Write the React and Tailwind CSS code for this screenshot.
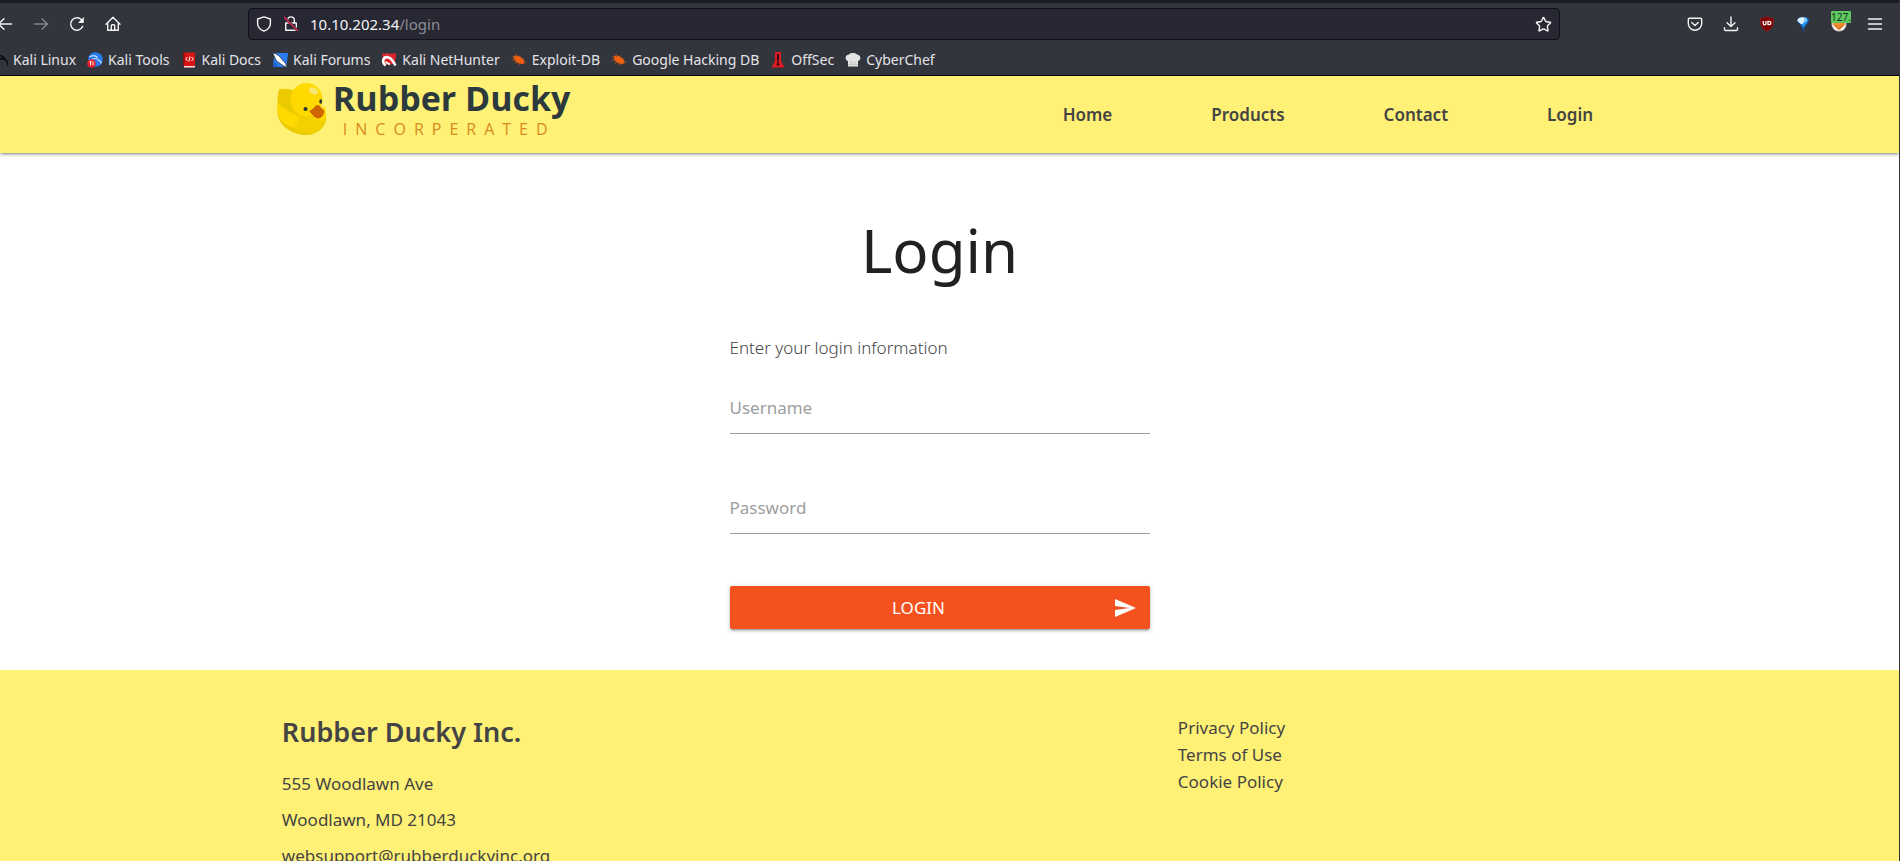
import React from "react";
import { Star } from "lucide-react";

const line = { fill: "none", stroke: "currentColor", strokeWidth: 1.4, strokeLinecap: "round", strokeLinejoin: "round" };

function Svg({ children }) {
  return (
    <svg width="16" height="16" viewBox="0 0 16 16" className="shrink-0" aria-hidden="true">
      {children}
    </svg>
  );
}

function BackIcon() {
  return <Svg><path {...line} d="M14.5 8H1.5M7 2.8 1.5 8 7 13.2" /></Svg>;
}
function ForwardIcon() {
  return <Svg><path {...line} d="M1.5 8h13M9 2.8 14.5 8 9 13.2" /></Svg>;
}
function ReloadIcon() {
  return (
    <Svg>
      <path {...line} d="M13.7 10.3A6.2 6.2 0 1 1 12.6 3.9" />
      <path fill="currentColor" d="M14.8 1v5.3a.6.6 0 0 1-.6.6H9z" />
    </Svg>
  );
}
function HomeIcon() {
  return (
    <Svg>
      <path {...line} d="M1 8.2 8 1.3l7 6.9M2.7 7v7.3h10.6V7M6.3 14.2V9.7c0-.6.4-1 1-1h1.4c.6 0 1 .4 1 1v4.5" />
    </Svg>
  );
}
function ShieldIcon() {
  return <Svg><path {...line} d="M8 .9 14.4 3v4.2c0 3.6-2.6 6.5-6.4 8-3.8-1.5-6.4-4.4-6.4-8V3z" /></Svg>;
}
function InsecureLockIcon() {
  return (
    <Svg>
      <path {...line} d="M4.7 7V4.2a3.3 3.3 0 0 1 6.6 0V7M2.7 7h10.6v7.3H2.7z" />
      <path d="M1.5 1.5 14.5 14.5" stroke="#272833" strokeWidth="2.6" />
      <path d="M1.5 1.5 14.5 14.5" stroke="#e22850" strokeWidth="1.5" strokeLinecap="round" />
    </Svg>
  );
}
function PocketIcon() {
  return (
    <Svg>
      <path {...line} d="M2.5 2.2h11c.7 0 1.2.5 1.2 1.2V7.5a6.7 6.7 0 0 1-13.4 0V3.4c0-.7.5-1.2 1.2-1.2z" />
      <path {...line} d="M4.8 6.5 8 9.5l3.2-3" />
    </Svg>
  );
}
function DownloadIcon() {
  return <Svg><path {...line} d="M8 1v9.5M4 6.7l4 3.9 4-3.9M1.5 11.7v1.6c0 .7.5 1.2 1.2 1.2h10.6c.7 0 1.2-.5 1.2-1.2v-1.6" /></Svg>;
}
function BlockerIcon() {
  return (
    <Svg>
      <path fill="#800000" stroke="#9a2a2a" strokeWidth=".5" d="M8 .5c2 1.3 4 1.7 6.5 1.7 0 6.3 0 9.3-6.500 13.3C1.5 11.5 1.5 8.5 1.5 2.2 4 2.2 6 1.8 8 .5z" />
      <path fill="none" stroke="#fff" strokeWidth="1.3" d="M4.3 5v2.5c0 .8.5 1.3 1.200 1.300S7 8.300 7 7.500V5M9 5.300v3.300h1.200c1 0 1.700-.7 1.700-1.600s-.7-1.600-1.700-1.600H8.300" />
    </Svg>
  );
}
function GemIcon() {
  return (
    <Svg>
      <path fill="#0a4fa8" d="M3.5 2C6 .5 10.5.5 12.8 2c1.5 1.5 1.5 3 .7 4.5L9 12v3H7.500v-3L2.500 6.500C1.700 5 2 3.500 3.500 2z" />
      <path fill="#2b95ee" d="M5 1.5h6.500l2 3.500-5.500 7z" />
      <path fill="#dff4ff" d="M4 2c2-1 4-1 5.500-.5L8.500 7 6.500 8.500 2.300 5C2.500 3.500 3 2.500 4 2z" />
      <path fill="#8ecbff" d="M9.500 1.500l2 .7L12 4.500 8.500 7z" />
    </Svg>
  );
}
function FoxIcon() {
  return (
    <Svg>
      <circle cx="8" cy="8" r="7.5" fill="#d9d3cb" />
      <circle cx="8" cy="7.5" r="6" fill="#f0882c" />
      <path d="M1.5 8.5 7 13.5 4 14zM14.5 8.5 9 13.5l3 .5z" fill="#fff" />
      <path d="M4 9.5c2 1 3 2.500 4 3.500 1-1 2-2.500 4-3.500" fill="none" stroke="#c0651f" />
    </Svg>
  );
}
function MenuIcon() {
  return <Svg><path {...line} d="M1.5 3h13M1.5 8h13M1.5 13h13" /></Svg>;
}

function BugIcon() {
  return (
    <Svg>
      <ellipse cx="8" cy="7.8" rx="6.2" ry="3.4" transform="rotate(32 8 7.8)" fill="#ee5f12" />
      <path d="M1 4.5 4 6M5 2l1 3M9 3l.5 3M.8 8.500l4-.5M4 12l2-2.500M8.500 13.500l.5-3M13 6.500 11 8M15.500 10.500 12 11" stroke="#9c4a20" strokeWidth=".9" />
    </Svg>
  );
}

const bookmarks = [
  ["Kali Linux", (
    <Svg>
      <path d="M0 4c6-1.500 11 0 13 3M4 8c4-1.500 7-1.500 9-.5 1 1.500 2 1.500 2.500 2.500.5 1.200.3 2.500.3 3.500" fill="none" stroke="#0b0c0f" strokeWidth="1.500" />
    </Svg>
  )],
  ["Kali Tools", (
    <Svg>
      <circle cx="8.5" cy="7.5" r="7.3" fill="#267bef" />
      <path d="M2.5 5c3-2 6-1.500 8 .5M4 8c3-2 6-1.500 7.500 0s2.500 1.500 3 3.500" fill="none" stroke="#cfe3ff" strokeWidth="1.200" />
      <circle cx="4.5" cy="11.5" r="4.3" fill="#e8202a" />
      <path d="M2.5 9.7h2M3.5 9.7v3.6M6 9.7v3.6" stroke="#fff" />
    </Svg>
  )],
  ["Kali Docs", (
    <Svg>
      <path d="M3 .5h11v15H3z" fill="#d91414" />
      <path d="M2 .5h1.5v13H2z" fill="#8b1010" />
      <path d="M3 14h11v1.5H3z" fill="#e9e0e0" />
      <path d="M6.500 5 4.700 7l1.800 2M10.500 5l1.800 2-1.800 2M9 4.500l-1 5" fill="none" stroke="#fff" />
    </Svg>
  )],
  ["Kali Forums", (
    <Svg>
      <path d="M2.5 1H16l-1.500 14H1z" fill="#2b7cf0" />
      <path d="M.5.8C5 2 8 4 10 7.500l3.500 3.800 1.500 4.200-4.500-2.300L4.500 9z" fill="#fff" stroke="#29303c" strokeWidth=".8" />
      <path d="M1.500 9l5 6H1z" fill="#1b64ce" />
    </Svg>
  )],
  ["Kali NetHunter", (
    <Svg>
      <path d="M1 1.5h14.5L13.500 12 3 13z" fill="#dc2730" />
      <path d="M4.500 13.500C0 9.500 2.500 4.500 7 5.200c3.500.5 5 4 7.500 8.300" fill="none" stroke="#fff" strokeWidth="2.600" />
      <path d="M4.500 10 9 12.500" stroke="#fff" strokeWidth="1.800" />
    </Svg>
  )],
  ["Exploit-DB", <BugIcon />],
  ["Google Hacking DB", <BugIcon />],
  ["OffSec", (
    <Svg>
      <path d="M5 0h6v9l3.500 6.500h-13L5 9z" fill="#e01a20" />
      <path d="M7 2h2v5L8.500 10l1 3.500h-3l1-3.500L7 7z" fill="#2b0d10" />
    </Svg>
  )],
  ["CyberChef", (
    <Svg>
      <path d="M3 14.500V9C-.5 8 0 3 3.500 2.800 5 .5 10.500.5 12.500 2.800 16 3 16.500 8 13 9v5.500z" fill="#e4e4e4" />
      <path d="M6 9v4M8 9.500v4M10.300 9v4M3 12.500h10" stroke="#c5c5c5" />
    </Svg>
  )],
];

function ToolButton({ label, children, className = "" }) {
  return (
    <button type="button" aria-label={label} className={`flex h-8 w-9 shrink-0 items-center justify-center ${className}`}>
      {children}
    </button>
  );
}

function BrowserBar() {
  return (
    <div className="border-t-[3px] border-b border-t-[#1b1c22] border-b-black bg-[#33353d] text-[#f4f4f6]">
      <div className="flex h-[42px] items-center pr-1.5">
        <div className="-ml-[13px] flex w-[261px]">
          <ToolButton label="Back"><BackIcon /></ToolButton>
          <ToolButton label="Forward" className="text-[#85868b]"><ForwardIcon /></ToolButton>
          <ToolButton label="Reload"><ReloadIcon /></ToolButton>
          <ToolButton label="Home page"><HomeIcon /></ToolButton>
        </div>
        <div className="flex h-8 min-w-0 flex-1 items-center gap-[11px] rounded border border-[#111218] bg-[#272833] px-[7px]">
          <ShieldIcon />
          <InsecureLockIcon />
          <a href="#address" className="flex-1 text-[15px]">
            10.10.202.34<span className="text-[#8d8e95]">/login</span>
          </a>
          <Star size={17} strokeWidth={2} aria-hidden="true" />
        </div>
        <div className="ml-[117px] flex">
          <ToolButton label="Pocket"><PocketIcon /></ToolButton>
          <ToolButton label="Downloads"><DownloadIcon /></ToolButton>
          <ToolButton label="Content blocker"><BlockerIcon /></ToolButton>
          <ToolButton label="Inspector"><GemIcon /></ToolButton>
          <ToolButton label="Proxy" className="relative">
            <FoxIcon />
            <span className="absolute top-[3px] left-2.5 rounded-[1px] bg-[#5fc75f] text-[10px] leading-3 text-[#12331a]">127.</span>
          </ToolButton>
          <ToolButton label="Menu"><MenuIcon /></ToolButton>
        </div>
      </div>
      <nav className="-ml-2 flex h-[30px] items-center gap-[11px] text-[#e4e4e8]" aria-label="Bookmarks">
        {bookmarks.map(([name, icon]) => (
          <a key={name} href="#bookmark" className="flex items-center gap-[5px] text-[14px] leading-5 whitespace-nowrap">
            {icon}
            {name}
          </a>
        ))}
      </nav>
    </div>
  );
}

function Duck() {
  return (
    <svg width="50" height="53" viewBox="0 0 50 53" className="mt-[3px]" aria-hidden="true">
      <path d="M2 6.5C6 5.2 13 5.5 18 8l26 16c3 3 5 6 5 11 0 9-9 17-20 17C15 52 1 42 .5 30 .2 22 .6 12 2 6.5z" fill="#ebca00" />
      <path d="M.8 20C6 27 13 28 19 32c5 3.500 5.500 9 1.500 11.500C17 46 11 43 7 40 2 36 0 31 .8 20z" fill="#ffd900" />
      <path d="M18 42c4-4 4-8 2-11l24 3 4.500-3c1 5 0 9-3 13-6 7-18 8-28 3z" fill="#f3d100" />
      <ellipse cx="29.5" cy="16.5" rx="16" ry="16.5" fill="#ffd900" />
      <path d="M36 28c5 1 9-1 11-5 2 5 3 9 1.500 12-3 3-8 4-11 1z" fill="#ffd900" />
      <ellipse cx="36.5" cy="8" rx="4.8" ry="3" transform="rotate(28 36.5 8)" fill="#f9e773" />
      <circle cx="28.5" cy="26" r="2" fill="#27363a" />
      <ellipse cx="43.7" cy="18.5" rx="1.4" ry="2.2" fill="#27363a" />
      <path d="M32 28c4-1 6-6 8.500-6 3 0 3.500 4 6.500 5 1 4-2 8-6 8.500-3 0-6-4.500-9-7.500z" fill="#cf6500" />
    </svg>
  );
}

const navLinks = ["Home", "Products", "Contact", "Login"];

function SiteHeader() {
  return (
    <header className="relative bg-[#fff176] pr-5 shadow-[0_2px_2px_0_rgba(0,0,0,0.14),0_3px_1px_-2px_rgba(0,0,0,0.12),0_1px_5px_0_rgba(0,0,0,0.2)]">
      <div className="mx-auto flex h-[77px] w-[70%] items-center justify-between">
        <a href="#home" className="-ml-[5px] flex items-start gap-1.5 self-start pt-1">
          <Duck />
          <span className="flex flex-col gap-[5px] font-['Open_Sans',sans-serif]">
            <span className="text-[34px] leading-9 font-bold text-[#2d3a3d]">Rubber Ducky</span>
            <span className="pl-2.5 text-[16px] leading-4 tracking-[8px] text-[#d98a1e]">INCORPERATED</span>
          </span>
        </a>
        <nav className="flex gap-[99px] pr-1 text-[17px] font-semibold text-[#444]" aria-label="Main">
          {navLinks.map((name) => (
            <a key={name} href="#nav">{name}</a>
          ))}
        </nav>
      </div>
    </header>
  );
}

function Field({ id, label, type }) {
  return (
    <div className="relative">
      <input
        id={id}
        type={type}
        placeholder=" "
        className="peer block h-[51px] w-full border-b border-[#9e9e9e] bg-transparent text-[17px] outline-none"
      />
      <label
        htmlFor={id}
        className="pointer-events-none absolute inset-y-0 left-0 flex items-center pb-0.5 text-[17px] text-[#9e9e9e] peer-focus:hidden peer-[:not(:placeholder-shown)]:hidden"
      >
        {label}
      </label>
    </div>
  );
}

function LoginForm() {
  return (
    <main className="pt-[59px] pr-5 pb-[41px]">
      <h1 className="text-center text-[60px] leading-[76px] text-[#212121]">Login</h1>
      <form className="mx-auto mt-[46px] w-[420px]" onSubmit={(e) => e.preventDefault()}>
        <p className="text-[17px] leading-7 font-light text-[#444]">Enter your login information</p>
        <div className="mt-[21px] flex flex-col gap-[49px]">
          <Field id="username" label="Username" type="text" />
          <Field id="password" label="Password" type="password" />
        </div>
        <button
          type="submit"
          className="mt-[52px] flex h-[43px] w-full items-center gap-[18px] rounded-xs bg-[#f4511e] px-[13px] text-white shadow-[0_2px_2px_0_rgba(0,0,0,0.14),0_3px_1px_-2px_rgba(0,0,0,0.12),0_1px_5px_0_rgba(0,0,0,0.2)]"
        >
          <span className="flex-1 text-center text-[17px]">LOGIN</span>
          <svg width="24" height="24" viewBox="0 0 24 24" fill="currentColor" aria-hidden="true">
            <path d="M2.01 21 23 12 2.01 3 2 10l15 2-15 2z" />
          </svg>
        </button>
      </form>
    </main>
  );
}

const policies = ["Privacy Policy", "Terms of Use", "Cookie Policy"];

function SiteFooter() {
  return (
    <footer className="flex-1 bg-[#fff176] pt-[42px] pr-5 text-[17px] text-[#444]">
      <div className="mx-auto grid w-[70%] grid-cols-[896px_1fr]">
        <div>
          <h2 className="text-[27px] leading-10 font-semibold">Rubber Ducky Inc.</h2>
          <p className="mt-[14px] leading-9">555 Woodlawn Ave</p>
          <p className="leading-9">Woodlawn, MD 21043</p>
          <p className="leading-9">websupport@rubberduckyinc.org</p>
        </div>
        <ul className="pt-0.5 leading-[27px]">
          {policies.map((name) => (
            <li key={name}><a href="#policy">{name}</a></li>
          ))}
        </ul>
      </div>
    </footer>
  );
}

export default function App() {
  return (
    <div className="flex h-screen flex-col overflow-hidden border-r border-[#33353d] bg-white font-['Noto_Sans',sans-serif]">
      <BrowserBar />
      <SiteHeader />
      <LoginForm />
      <SiteFooter />
    </div>
  );
}
